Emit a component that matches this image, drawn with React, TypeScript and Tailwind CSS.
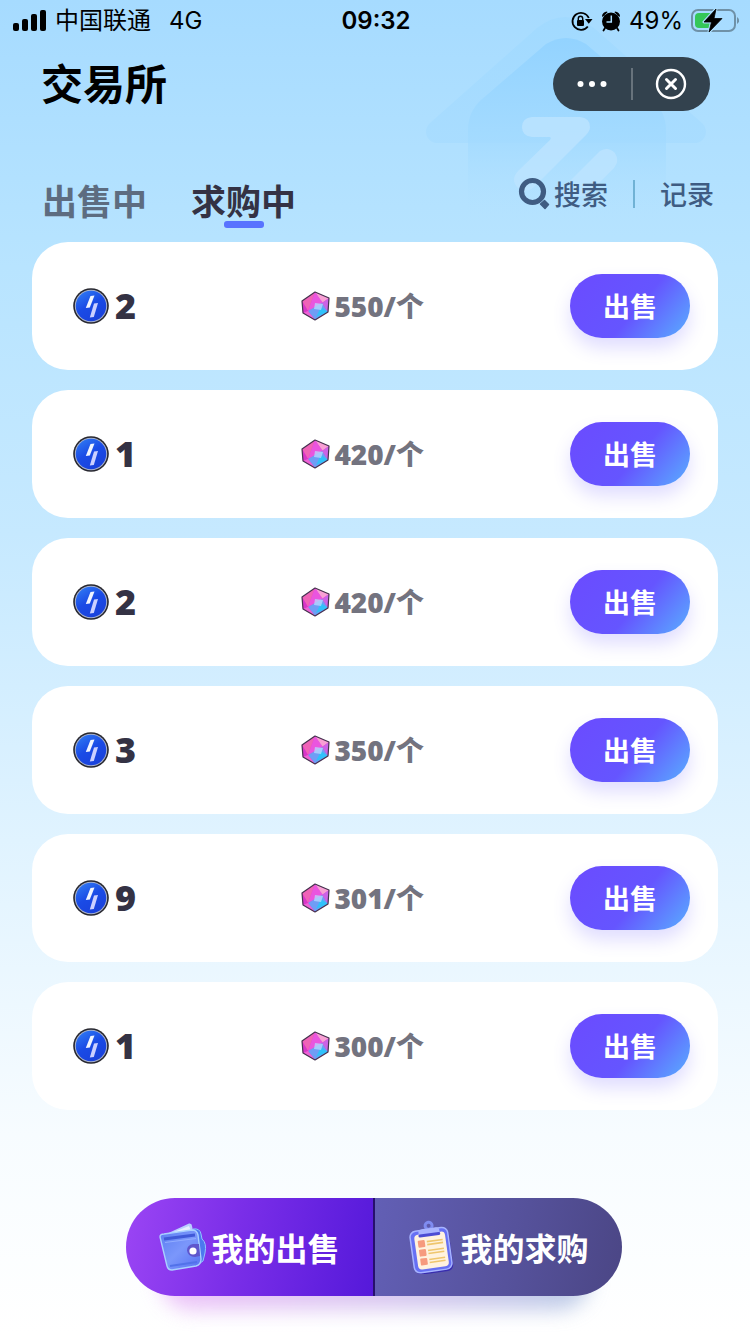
import { useState } from 'react';

type Order = {
  id: number;
  count: number;
  price: number;
};

const orders: Order[] = [
  { id: 1, count: 2, price: 550 },
  { id: 2, count: 1, price: 420 },
  { id: 3, count: 2, price: 420 },
  { id: 4, count: 3, price: 350 },
  { id: 5, count: 9, price: 301 },
  { id: 6, count: 1, price: 300 },
];

function HouseMark() {
  return (
    <svg className="pointer-events-none absolute top-0 right-0" width="340" height="240" viewBox="410 0 340 240" aria-hidden="true">
      <defs>
        <linearGradient id="roof" x1="0" y1="0" x2="0" y2="1">
          <stop offset="0" stopColor="#9fd9ff" stopOpacity="0.7" />
          <stop offset="1" stopColor="#a6dbff" stopOpacity="0.7" />
        </linearGradient>
        <linearGradient id="wall" x1="0" y1="0" x2="0" y2="1">
          <stop offset="0" stopColor="#91d2ff" stopOpacity="0.9" />
          <stop offset="0.55" stopColor="#a2daff" stopOpacity="0.8" />
          <stop offset="1" stopColor="#b4e2ff" stopOpacity="0" />
        </linearGradient>
      </defs>
      <path
        d="M438 143 C427 143 422 131 430 123 L537 28 Q565 6 594 28 L702 123 C710 131 705 143 694 143 Z"
        fill="url(#roof)"
      />
      <path
        d="M468 220 V130 Q468 112 481 100 L546 44 Q566 32 586 44 L652 100 Q666 112 666 130 V220 Z"
        fill="url(#wall)"
      />
      <g fill="#bde4ff" fillOpacity="0.8">
        <path d="M532 117 H580 Q590 118 590 127 Q590 131 586 135 L534 187 Q526 194 518 188 Q510 180 518 171 L550 140 Q552 137 549 137 H532 Q522 136 522 127 Q522 118 532 117 Z" />
        <path d="M600 151 Q608 146 615 153 Q620 161 614 168 L586 196 H560 Q564 186 572 179 Z" />
      </g>
    </svg>
  );
}

function SignalIcon() {
  return (
    <svg width="34" height="22" viewBox="0 0 34 22" aria-hidden="true">
      <rect x="0" y="13" width="6" height="8" rx="2" />
      <rect x="9" y="9" width="6" height="12" rx="2" />
      <rect x="18" y="4" width="6" height="17" rx="2" />
      <rect x="27" y="0" width="6" height="21" rx="2" />
    </svg>
  );
}

function RotationLockIcon() {
  return (
    <svg width="22" height="22" viewBox="0 0 22 22" aria-hidden="true">
      <path d="M16.8 16.5 A8.5 8.5 0 1 1 17.8 8" fill="none" stroke="#000" strokeWidth="1.8" />
      <path d="M14 9 H21.5 L17.8 13.8 Z" />
      <rect x="6" y="10" width="7" height="6" rx="1" />
      <path d="M7.3 10.5 V8.4 a2.2 2.2 0 0 1 4.4 0 V10.5" fill="none" stroke="#000" strokeWidth="1.4" />
    </svg>
  );
}

function AlarmIcon() {
  return (
    <svg width="20" height="22" viewBox="0 0 20 22" aria-hidden="true">
      <circle cx="10" cy="11.5" r="9" />
      <path d="M1 6 Q1.5 2 6 1.5 L6.5 2.2 L1.6 7 Z M19 6 Q18.5 2 14 1.5 L13.5 2.2 L18.4 7 Z" />
      <path d="M4 18 L2.5 20.5 M16 18 L17.5 20.5" stroke="#000" strokeWidth="1.8" strokeLinecap="round" />
      <path d="M10.3 5.5 V12 H5.5" fill="none" stroke="#abdeff" strokeWidth="1.5" />
    </svg>
  );
}

function BatteryIcon() {
  return (
    <svg width="48" height="26" viewBox="0 0 48 26" aria-hidden="true">
      <rect x="1" y="2" width="43" height="21" rx="6" fill="none" stroke="#6f91a7" strokeWidth="2" />
      <path d="M46 9 a4 4 0 0 1 0 7 Z" fill="#6f91a7" />
      <path d="M8 5 H21 V20 H8 a4 4 0 0 1 -4 -4 V9 a4 4 0 0 1 4 -4 Z" fill="#34c759" />
      <path d="M25 1 L13 14 H20.5 L18 24 L31 10.5 H23 Z" stroke="#abdeff" strokeWidth="3" strokeLinejoin="round" />
      <path d="M25 1 L13 14 H20.5 L18 24 L31 10.5 H23 Z" stroke="#000" strokeWidth="0.8" />
    </svg>
  );
}

function SearchIcon() {
  return (
    <svg width="32" height="34" viewBox="0 0 32 34" aria-hidden="true">
      <circle cx="14.5" cy="14.5" r="11" fill="none" stroke="#3f5c82" strokeWidth="5.2" />
      <path d="M22.5 27 L26.5 23.5 L30.5 27.5 L27 31.5 Z" fill="#3f5c82" stroke="#3f5c82" strokeWidth="1.5" strokeLinejoin="round" />
    </svg>
  );
}

function CoinIcon() {
  return (
    <svg width="36" height="36" viewBox="0 0 36 36" aria-hidden="true">
      <defs>
        <linearGradient id="coin" x1="0.2" y1="0" x2="0.8" y2="1">
          <stop offset="0" stopColor="#2f78f2" />
          <stop offset="0.45" stopColor="#1a4be6" />
          <stop offset="1" stopColor="#1a40da" />
        </linearGradient>
      </defs>
      <circle cx="18" cy="18" r="17.8" fill="#27272f" />
      <circle cx="18" cy="18" r="16.2" fill="#a9b2cc" />
      <circle cx="18" cy="18" r="15.2" fill="url(#coin)" />
      <path d="M17.5 8 L21.5 7.5 L16.8 19.5 L12.8 20 Z" fill="#f1f5ff" />
      <path d="M21 15.5 L25 15 L20.8 29 L16.8 29.5 Z" fill="#ccd0ff" />
    </svg>
  );
}

function GemIcon() {
  return (
    <svg width="29" height="30" viewBox="0 0 29 30" aria-hidden="true">
      <path d="M14 1 L28 7 L27 21 L14 29 L2 22 L1 10 Z" fill="#e83fc5" />
      <path d="M14 1 L28 7 L21 12 Z" fill="#f8a0d4" />
      <path d="M14 1 L1 10 L7 20 Z" fill="#ef63b7" />
      <path d="M14 1 L7 20 L22 12 Z" fill="#ea55df" />
      <path d="M28 7 L21 12 L27 21 Z" fill="#cb63e6" />
      <path d="M7 20 L21 12 L27 21 L14 29 Z" fill="#6f9df5" />
      <path d="M20 16 L27 21 L15 26 Z" fill="#30c1fa" />
      <path d="M1 10 L7 20 L2 22 Z" fill="#d936c9" />
      <path d="M2 22 L7 20 L14 29 Z" fill="#ee62d6" />
      <path d="M14 12 L22 13 L20 19 L13 18 Z" fill="#b8d9ff" fillOpacity="0.75" />
      <path d="M14 1 L28 7 L27 21 L14 29 L2 22 L1 10 Z" fill="none" stroke="#45334f" strokeWidth="1.2" strokeLinejoin="round" />
    </svg>
  );
}

function WalletIcon() {
  return (
    <svg width="48" height="48" viewBox="0 0 48 48" aria-hidden="true">
      <defs>
        <linearGradient id="wallet" x1="0" y1="0" x2="1" y2="1">
          <stop offset="0" stopColor="#5b7df2" />
          <stop offset="0.5" stopColor="#7b97fb" />
          <stop offset="1" stopColor="#5570f2" />
        </linearGradient>
      </defs>
      <path d="M3 13 L30 0.5 Q33 0 33 3 L35 12 L8 18 Z" fill="#b9cfff" />
      <path d="M7 12 L30 3 L32 8 L10 15 Z" fill="#e7f0ff" />
      <path d="M34 6 Q41 5 42 11 L43 16 Q48 20 46 30 L44 38 L37 43 Z" fill="#4c78ef" stroke="#8fc4ff" />
      <path d="M1 14 Q1 11 5 11 L33 7 Q38 7 39 12 L42 36 Q42 42 37 43 L13 47 Q9 47 8 43 Z" fill="url(#wallet)" stroke="#a9d0ff" strokeWidth="1.4" />
      <path d="M5 16 L36 12" stroke="#3f59d8" strokeWidth="3" />
      <path d="M6 19.5 L37 15.5" stroke="#92adff" strokeWidth="1.2" />
      <path d="M11 43 L38 39" stroke="#5272e9" strokeWidth="2" />
      <path d="M40 21 H34 Q28 22 28 27.5 Q29 34 36 34 L41 33 Z" fill="#5f56cc" />
      <circle cx="34" cy="28" r="3.6" fill="#fff" />
    </svg>
  );
}

function ClipboardIcon() {
  return (
    <svg width="48" height="54" viewBox="0 0 48 54" aria-hidden="true">
      <g transform="rotate(-8 24 30)">
        <rect x="5" y="11" width="38" height="42" rx="6" fill="#382cae" />
        <rect x="4" y="9" width="38" height="42" rx="6" fill="#6670f4" stroke="#a6b3ff" strokeWidth="1.5" />
        <rect x="8" y="13" width="31" height="35" rx="4" fill="#fff2df" />
        <circle cx="24" cy="5.5" r="3.5" fill="none" stroke="#7f8cf0" strokeWidth="3" />
        <path d="M13 10 Q14 8 18 8 H30 Q34 8 34 11 V15 H13 Z" fill="#a9b4ff" />
        <path d="M14 14.5 H33" stroke="#4c4cd4" strokeWidth="3" strokeLinecap="round" />
        <g fill="#f69a7e">
          <rect x="11" y="19" width="7" height="7" rx="1" />
          <rect x="11" y="28" width="7" height="7" rx="1" />
          <rect x="11" y="37" width="7" height="7" rx="1" />
        </g>
        <path d="M20 21 H36 M20 24 H36 M20 30 H36 M20 33 H36 M20 39 H36 M20 42 H36" stroke="#efc66e" strokeWidth="1.6" />
      </g>
    </svg>
  );
}

function StatusBar() {
  return (
    <div className="relative grid h-10 grid-cols-[1fr_auto_1fr] items-center pt-[2px] pr-[11px] pl-[13px] font-[Inter,'Noto_Sans_CJK_SC',sans-serif] text-2xl leading-8 text-black">
      <div className="flex items-center gap-2">
        <SignalIcon />
        <span>中国联通</span>
        <span className="ml-[10px]">4G</span>
      </div>
      <span className="font-semibold">09:32</span>
      <div className="flex items-center justify-end gap-2">
        <RotationLockIcon />
        <AlarmIcon />
        <span>49%</span>
        <BatteryIcon />
      </div>
    </div>
  );
}

function OrderCard({ order }: { order: Order }) {
  return (
    <li className="grid h-32 grid-cols-[6fr_7fr_120px] items-center rounded-[36px] bg-white pr-7 pl-[41px]">
      <div className="flex items-center gap-[6px]">
        <CoinIcon />
        <span className="font-['Open_Sans',sans-serif] text-4xl font-extrabold text-[#343244]">{order.count}</span>
      </div>
      <div className="-ml-px flex items-center gap-1">
        <GemIcon />
        <span className="font-['Open_Sans','Noto_Sans_CJK_SC',sans-serif] text-[28px] leading-8 font-extrabold text-[#73737f]">
          {order.price}/个
        </span>
      </div>
      <button
        type="button"
        className="h-16 rounded-full bg-[linear-gradient(130deg,#6b4bff_0%,#6555ff_55%,#5aa5ff_95%)] text-[27px] font-bold text-white shadow-[0_10px_18px_rgba(100,84,255,0.2)]"
      >
        出售
      </button>
    </li>
  );
}

export default function App() {
  const [tab, setTab] = useState<'sell' | 'buy'>('buy');
  const tabClass = "relative pb-1 text-[35px] leading-10 font-bold";
  const activeBar = <span className="absolute -bottom-1 left-1/2 h-[7px] w-10 -translate-x-1/2 rounded-[3px] bg-[#5873ff]" />;

  return (
    <div className="relative flex min-h-screen flex-col overflow-hidden bg-[linear-gradient(180deg,#a6dbff_0%,#b8e4ff_20%,#c6e9ff_40%,#e0f3ff_63%,#f7fcff_85%,#ffffff_100%)] font-['Noto_Sans_CJK_SC',sans-serif]">
      <HouseMark />
      <StatusBar />

      <header className="relative flex items-center justify-between pt-[17px] pr-10 pl-[41px]">
        <h1 className="pb-1 text-[42px] leading-[50px] font-bold text-black">交易所</h1>
        <div className="flex h-[54px] w-[157px] items-center rounded-full bg-[#33424e]">
          <button type="button" aria-label="更多" className="flex h-full flex-1 items-center justify-center">
            <svg width="30" height="8" viewBox="0 0 30 8" fill="#fff">
              <circle cx="3.5" cy="4" r="3" />
              <circle cx="15" cy="4" r="3" />
              <circle cx="26.5" cy="4" r="3" />
            </svg>
          </button>
          <span className="h-8 w-[2px] bg-[#68737c]" />
          <button type="button" aria-label="关闭" className="flex h-full flex-1 items-center justify-center">
            <svg width="32" height="32" viewBox="0 0 32 32" fill="none" stroke="#fff" strokeLinecap="round">
              <circle cx="16" cy="16" r="14" strokeWidth="2.4" />
              <path d="M11.5 11.5 L20.5 20.5 M20.5 11.5 L11.5 20.5" strokeWidth="3" />
            </svg>
          </button>
        </div>
      </header>

      <div className="relative mt-[69px] flex items-start justify-between pr-9 pl-[42px]">
        <div className="flex gap-11">
          <button type="button" onClick={() => setTab('sell')} className={`${tabClass} ${tab === 'sell' ? 'text-[#343244]' : 'text-[#5d6c80]'}`}>
            出售中
            {tab === 'sell' && activeBar}
          </button>
          <button type="button" onClick={() => setTab('buy')} className={`${tabClass} ${tab === 'buy' ? 'text-[#343244]' : 'text-[#5d6c80]'}`}>
            求购中
            {tab === 'buy' && activeBar}
          </button>
        </div>
        <div className="flex h-7 items-center gap-[25px] text-[27px] font-medium text-[#3f5c82]">
          <button type="button" className="flex items-center gap-1">
            <SearchIcon />
            搜索
          </button>
          <span className="h-7 w-[2px] bg-[#70b2d5]" />
          <button type="button">记录</button>
        </div>
      </div>

      <ul className="relative mt-[18px] flex flex-col gap-5 px-8">
        {orders.map((order) => (
          <OrderCard key={order.id} order={order} />
        ))}
      </ul>

      <nav className="relative mt-22 pr-32 pb-[38px] pl-[126px]">
        {/* coloured glow under the bar */}
        <span className="absolute right-40 bottom-6 left-40 h-16 rounded-full bg-[linear-gradient(90deg,#e29af5_0%,#c3a3e8_50%,#8fa9d6_100%)] opacity-60 blur-[10px]" />
        <div className="relative flex text-[32px] font-bold text-white">
          <button
            type="button"
            className="flex h-[98px] flex-1 items-center justify-center gap-1 rounded-l-full border-r-2 border-[#26106c] bg-[linear-gradient(100deg,#9b45f4_0%,#7a2ee8_45%,#5519da_100%)]"
          >
            <WalletIcon />
            我的出售
          </button>
          <button
            type="button"
            className="flex h-[98px] flex-1 items-center justify-center gap-1 rounded-r-full bg-[linear-gradient(100deg,#625fb5_0%,#56529c_55%,#4b4685_100%)]"
          >
            <ClipboardIcon />
            我的求购
          </button>
        </div>
      </nav>
    </div>
  );
}
